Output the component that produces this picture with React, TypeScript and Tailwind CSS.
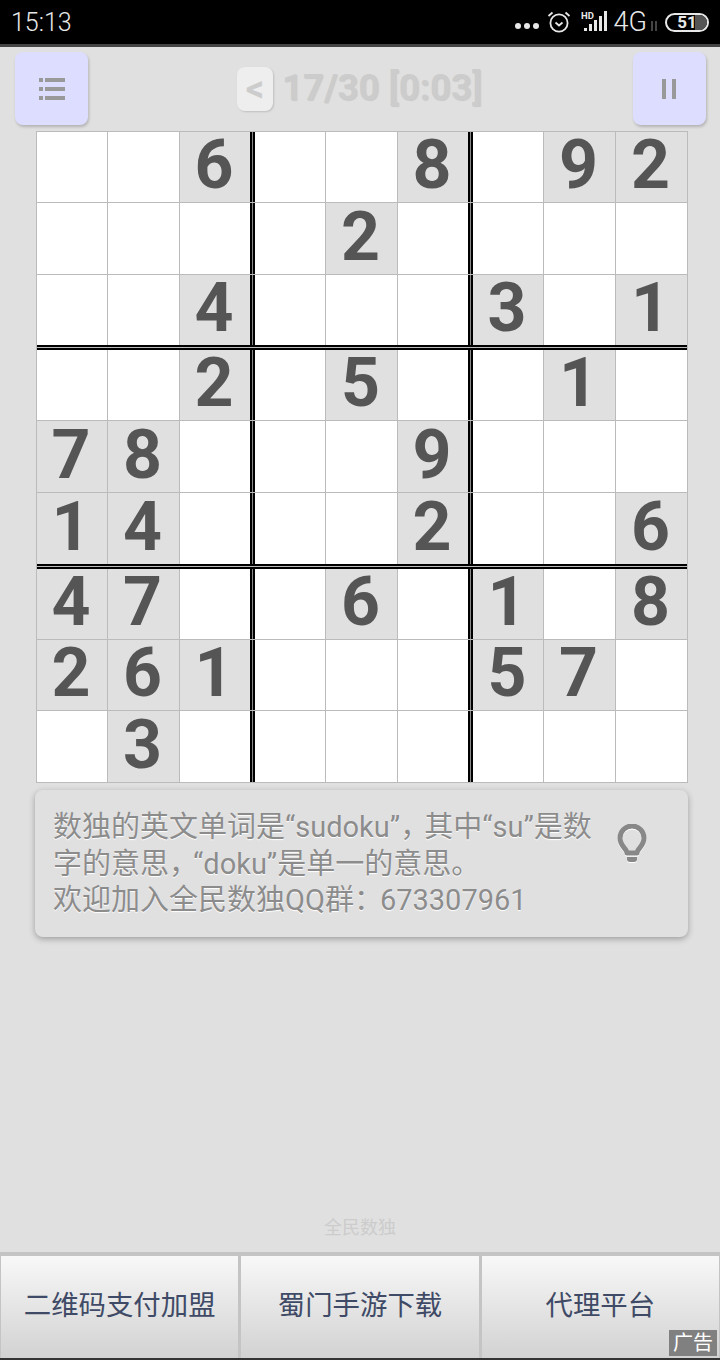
const board = [
  "006008092",
  "000020000",
  "004000301",
  "002050010",
  "780009000",
  "140002006",
  "470060108",
  "261000570",
  "030000000",
];
const colWidths = [70, 71, 70, 70, 71, 70, 70, 71, 71];
const rowHeights = [70, 71, 70, 70, 71, 71, 70, 70, 71];

function ListIcon() {
  return (
    <svg width="26" height="24" viewBox="0 0 26 24" fill="#999999">
      <rect x="0" y="1" width="4" height="4" />
      <rect x="6" y="1" width="20" height="4" />
      <rect x="0" y="10" width="4" height="4" />
      <rect x="6" y="10" width="20" height="4" />
      <rect x="0" y="19" width="4" height="4" />
      <rect x="6" y="19" width="20" height="4" />
    </svg>
  );
}

function Bulb() {
  return (
    <svg width="30" height="40" viewBox="0 0 30 40" fill="none" className="drop-shadow-[0_1px_0_#ffffff]">
      <path d="M10 29c0-4-7-7-7-15a12 12 0 0 1 24 0c0 8-7 11-7 15z" stroke="#888888" strokeWidth="5" strokeLinejoin="round" />
      <path d="M10 33h10v2a3 3 0 0 1-3 3h-4a3 3 0 0 1-3-3z" fill="#888888" />
    </svg>
  );
}

function StatusIcons() {
  return (
    <div className="flex items-center text-[#e8e8e8]">
      <div className="flex gap-[3px] mr-[8px] mt-[8px]">
        <span className="w-[6px] h-[6px] rounded-full bg-[#e8e8e8]" />
        <span className="w-[6px] h-[6px] rounded-full bg-[#e8e8e8]" />
        <span className="w-[6px] h-[6px] rounded-full bg-[#e8e8e8]" />
      </div>
      <svg width="24" height="24" viewBox="0 0 24 24" fill="none" stroke="#e8e8e8" strokeWidth="1.8" className="mr-[10px]">
        <circle cx="12" cy="13" r="8.6" />
        <path d="M8.5 12.5l3.5 3 3.5-3" />
        <path d="M1.5 6l4-3.5M22.5 6l-4-3.5" />
      </svg>
      <svg width="28" height="24" viewBox="0 0 28 24" fill="#e8e8e8" className="mr-[5px]">
        <rect x="3" y="18" width="3" height="3" />
        <rect x="8" y="14" width="3" height="7" />
        <rect x="13" y="10" width="3" height="11" />
        <rect x="18" y="6" width="3" height="15" />
        <rect x="23" y="1" width="3" height="20" />
        <text x="0" y="9" fontSize="9.5" fontWeight="700" fontFamily="Roboto, sans-serif">HD</text>
      </svg>
      <span className="text-[27px] leading-none font-['Roboto',sans-serif] font-light">4G</span>
      <svg width="8" height="10" viewBox="0 0 8 10" stroke="#888888" strokeWidth="1" className="ml-[3px] mt-[8px] mr-[7px]">
        <path d="M2 0v10M6 0v10" />
      </svg>
      <div className="relative flex items-center justify-center w-[44px] h-[19px] rounded-full border-2 border-[#e8e8e8] overflow-hidden">
        <span className="absolute right-0 top-0 bottom-0 w-[12px] bg-[#555555]" />
        <span className="relative text-[17px] leading-none font-bold font-['Roboto',sans-serif] text-[#e8e8e8]">51</span>
      </div>
    </div>
  );
}

function Row({ digits, height }: { digits: string; height: number }) {
  return (
    <div className="flex" style={{ height }}>
      {digits.split("").map((d, i) => (
        <div key={i} className="contents">
          <div
            className={`flex items-center justify-center font-['Roboto',sans-serif] font-bold text-[68px] leading-none text-[#555555] pb-[4px] pr-[2px] ${
              d === "0" ? "bg-white" : "bg-[#e0e0e0]"
            } ${i === 2 || i === 5 || i === 8 ? "" : "mr-px"}`}
            style={{ width: colWidths[i] }}
          >
            {d === "0" ? "" : d}
          </div>
          {(i === 2 || i === 5) && (
            <div className="w-[5px] self-stretch border-x-2 border-black bg-[#888888]" />
          )}
        </div>
      ))}
    </div>
  );
}

function Board() {
  return (
    <div className="ml-[36px] w-[652px] bg-[#bbbbbb] p-px flex flex-col mt-[6px] self-start">
      {board.map((r, i) => (
        <div key={i} className="contents">
          <div className={i === 2 || i === 5 || i === 8 ? "" : "mb-px"}>
            <Row digits={r} height={rowHeights[i]} />
          </div>
          {(i === 2 || i === 5) && (
            <div className="h-[5px] border-y-2 border-black bg-[#bbbbbb]" />
          )}
        </div>
      ))}
    </div>
  );
}

function AdButton({ label }: { label: string }) {
  return (
    <div className="flex-1 flex items-center justify-center bg-gradient-to-b from-[#f8f8f8] to-[#d2d2d2] text-[27.4px] text-[#3f4a66] pb-[1px]">
      {label}
    </div>
  );
}

export default function App() {
  return (
    <div className="w-[720px] h-[1360px] flex flex-col bg-[#e0e0e0] font-['Roboto','Noto_Sans_CJK_SC',sans-serif] overflow-hidden">
      <div className="h-[47px] shrink-0 bg-black border-b-[3px] border-[#444444] flex items-center justify-between pl-[11px] pr-[11px]">
        <span className="text-[25px] leading-none text-[#e8e8e8] font-light">15:13</span>
        <StatusIcons />
      </div>

      <div className="flex items-center justify-between pl-[15px] pr-[14px] mt-[5px] h-[73px] shrink-0">
        <button className="w-[73px] h-[73px] rounded-lg bg-[#ddddff] shadow-[1px_2px_3px_rgba(0,0,0,0.2)] flex items-center justify-center">
          <ListIcon />
        </button>
        <div className="flex items-center gap-[9px] mr-[2px]">
          <span className="w-[36px] h-[44px] rounded-lg bg-[#eeeeee] shadow-[1px_1px_2px_rgba(0,0,0,0.15)] flex items-center justify-center text-[36px] font-bold text-[#cccccc] leading-none">
            &lt;
          </span>
          <span className="text-[36.6px] leading-none font-bold text-[#cccccc] [text-shadow:1px_1px_1px_rgba(0,0,0,0.1)]">
            17/30 [0:03]
          </span>
        </div>
        <button className="w-[73px] h-[73px] rounded-lg bg-[#ddddff] shadow-[1px_2px_3px_rgba(0,0,0,0.2)] flex items-center justify-center">
          <svg width="14" height="20" viewBox="0 0 14 20" fill="#999999">
            <rect x="0" y="0" width="4" height="20" />
            <rect x="10" y="0" width="4" height="20" />
          </svg>
        </button>
      </div>

      <Board />

      <div className="ml-[35px] w-[653px] h-[147px] mt-[7px] rounded-lg bg-[#e0e0e0] shadow-[0_2px_6px_rgba(0,0,0,0.3)] flex items-start pl-[18px] shrink-0">
        <p className="w-[550px] mt-[19px] text-[29px] leading-[36.5px] text-[#8c8c8c] [text-shadow:0_1px_1px_#ffffff]">
          数独的英文单词是“sudoku”<span className="tracking-[-5px]">，</span>其中“su”是数字的意思<span className="tracking-[-5px]">，</span>“doku”是单一的意思。
          <br />
          欢迎加入全民数独QQ群<span className="tracking-[-3px]">：</span>673307961
        </p>
        <div className="ml-[14px] mt-[34px]">
          <Bulb />
        </div>
      </div>

      <div className="flex-1" />

      <div className="text-center text-[18px] leading-none text-[#cccccc] mb-[15px]">全民数独</div>

      <div className="relative h-[108px] shrink-0 bg-[#c4c4c4] border-b-[2px] border-[#333333] pt-[4px] pl-[1px] pr-[1px] flex gap-[3px]">
        <AdButton label="二维码支付加盟" />
        <AdButton label="蜀门手游下载" />
        <AdButton label="代理平台" />
        <span className="absolute right-[3px] bottom-[2px] w-[48px] h-[26px] bg-[#808080] text-white text-[20px] leading-[26px] text-center">
          广告
        </span>
      </div>
    </div>
  );
}
